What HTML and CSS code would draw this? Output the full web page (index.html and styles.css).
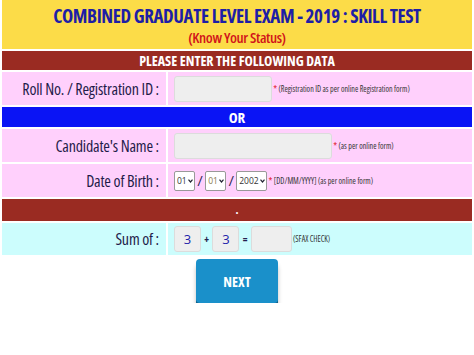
FILE: index.html
```html
<!DOCTYPE html>
<html lang="en">
<head>
	<meta charset="UTF-8">
	<title>CGLE 2019 : Skill Test</title>
	<link rel="stylesheet" href="styles.css">
</head>
<body>
	<table class="formTable">
		<tr>
			<td colspan="2" class="header">
				<div class="title">COMBINED GRADUATE LEVEL EXAM - 2019 : SKILL TEST</div>
				<div class="subTitle">(Know Your Status)</div>
			</td>
		</tr>
		<tr>
			<td colspan="2" class="bar">PLEASE ENTER THE FOLLOWING DATA</td>
		</tr>
		<tr class="pinkRow">
			<td class="label">Roll No. / Registration ID :</td>
			<td class="field">
				<input type="text" class="box rollBox">
				<span class="star">*</span>
				<span class="note">(Registration ID as per online Registration form)</span>
			</td>
		</tr>
		<tr>
			<td colspan="2" class="orBar">OR</td>
		</tr>
		<tr class="pinkRow">
			<td class="label">Candidate's Name :</td>
			<td class="field">
				<input type="text" class="box nameBox">
				<span class="star">*</span>
				<span class="note">(as per online form)</span>
			</td>
		</tr>
		<tr class="pinkRow">
			<td class="label">Date of Birth :</td>
			<td class="field">
				<span class="pickWrap"><select class="pick"><option>01</option></select><svg class="chev" width="5" height="4" viewBox="0 0 5 4"><path d="M0.5 0.7 L2.5 3 L4.5 0.7" fill="none" stroke="#223" stroke-width="1.2"/></svg></span>
				<span class="slash">/</span>
				<span class="pickWrap"><select class="pick light"><option>01</option></select><svg class="chev" width="5" height="4" viewBox="0 0 5 4"><path d="M0.5 0.7 L2.5 3 L4.5 0.7" fill="none" stroke="#223" stroke-width="1.2"/></svg></span>
				<span class="slash">/</span>
				<span class="pickWrap"><select class="pick year"><option>2002</option></select><svg class="chev" width="5" height="4" viewBox="0 0 5 4"><path d="M0.5 0.7 L2.5 3 L4.5 0.7" fill="none" stroke="#223" stroke-width="1.2"/></svg></span>
				<span class="star">*</span>
				<span class="note">[DD/MM/YYYY] (as per online form)</span>
			</td>
		</tr>
		<tr>
			<td colspan="2" class="bar thinBar">.</td>
		</tr>
		<tr class="cyanRow">
			<td class="label">Sum of :</td>
			<td class="field">
				<input type="text" class="box numBox" value="3" readonly>
				<span class="sign">+</span>
				<input type="text" class="box numBox" value="3" readonly>
				<span class="sign">=</span>
				<input type="text" class="box sumBox">
				<span class="note">(SFAX CHECK)</span>
			</td>
		</tr>
	</table>
	<div class="nextWrap">
		<button class="nextButton">NEXT</button>
	</div>
</body>
</html>
```

FILE: styles.css
```css
* {
	margin: 0;
	padding: 0;
	box-sizing: border-box;
}

body {
	background-color: #fff;
	font-family: "Open Sans", sans-serif;
	font-stretch: 75%;
}

.formTable {
	width: 474px;
	border-spacing: 2px;
	margin-top: -2px;
}

.formTable td {
	padding: 0;
	line-height: 1;
}

.header {
	background-color: #fcdc48;
	height: 49px;
	text-align: center;
	vertical-align: top;
	padding-top: 6px !important;
}

.title {
	color: #1e1ea6;
	font-size: 19px;
	font-weight: bold;
	letter-spacing: -0.4px;
	line-height: 20px;
	white-space: nowrap;
}

.subTitle {
	color: #d2141a;
	font-size: 15px;
	font-weight: 600;
	letter-spacing: -0.4px;
	line-height: 18px;
	margin-top: 2px;
}

.bar {
	background-color: #9a2b22;
	color: #fff;
	height: 19px;
	text-align: center;
	font-size: 14px;
	font-weight: bold;
}

.formTable .thinBar {
	font-size: 12px;
	line-height: 22px;
}

.orBar {
	background-color: #0a14f5;
	color: #fff;
	height: 20px;
	text-align: center;
	font-size: 15px;
	font-weight: bold;
}

.pinkRow td {
	background-color: #ffd0fc;
	height: 33px;
}

.cyanRow td {
	background-color: #ccfdfd;
	height: 32px;
}

.label {
	width: 164px;
	text-align: right;
	padding-right: 7px !important;
	color: #1f1c4a;
	font-size: 16px;
	font-weight: 500;
	letter-spacing: -0.2px;
}

.field {
	padding-left: 6px !important;
	font-size: 7px;
	white-space: nowrap;
}

.box {
	background-color: #eeeeee;
	border: 1px solid #dcdcdc;
	border-radius: 3px;
	height: 26px;
	vertical-align: middle;
	font-family: inherit;
}

.rollBox {
	width: 98px;
}

.nameBox {
	width: 158px;
}

.numBox {
	width: 27px;
	text-align: center;
	color: #2222aa;
	font-size: 13px;
}

.sumBox {
	width: 41px;
}

.star {
	color: #e0202a;
	font-size: 10px;
	vertical-align: middle;
}

.note {
	color: #333;
	font-size: 8px;
	vertical-align: middle;
}

.pickWrap {
	position: relative;
	display: inline-block;
	vertical-align: middle;
}

.pick {
	appearance: none;
	-webkit-appearance: none;
	width: 21px;
	height: 20px;
	padding-left: 2px;
	font-size: 8.5px;
	border: 1px solid #999;
	border-radius: 2px;
	background-color: #fff;
	color: #333;
	font-family: inherit;
	display: block;
}

.pick.light {
	color: #8a7a50;
}

.pick.year {
	width: 31px;
}

.chev {
	position: absolute;
	right: 2px;
	top: 8px;
}

.slash {
	color: #24204e;
	font-size: 15px;
	vertical-align: middle;
	margin: 0 1px;
}

.sign {
	color: #24204e;
	font-size: 10px;
	font-weight: bold;
	vertical-align: middle;
	margin: 0 2px;
}

.nextWrap {
	text-align: center;
	padding-top: 2px;
}

.nextButton {
	width: 82px;
	height: 44px;
	background-color: #1a90ca;
	color: #fff;
	border: none;
	border-radius: 4px;
	box-shadow: 0 4px 0 #0e628c, 0 6px 4px rgba(0, 0, 0, 0.25);
	font-family: "Open Sans", sans-serif;
	font-stretch: 75%;
	font-weight: bold;
	font-size: 14px;
}
```
